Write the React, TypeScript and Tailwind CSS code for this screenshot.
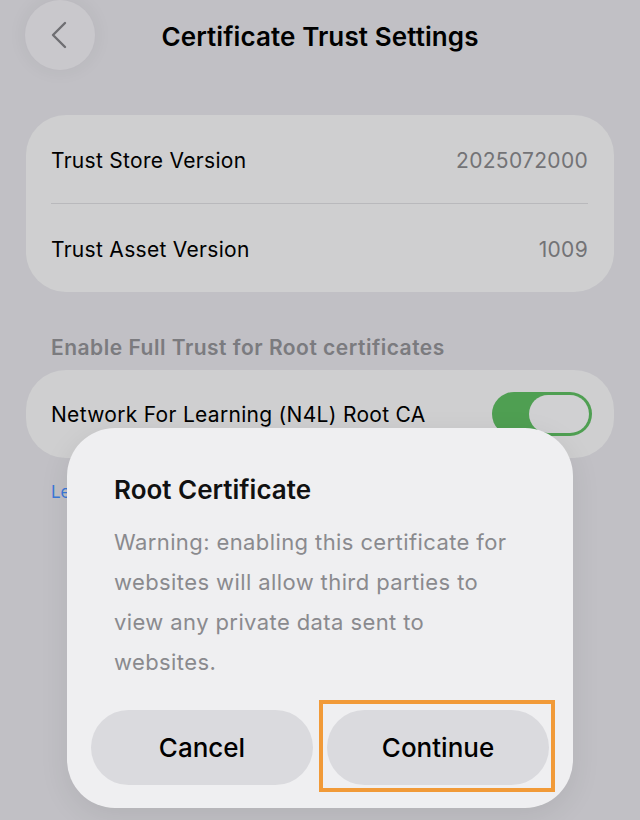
import { ChevronLeft } from 'lucide-react';

export default function App() {
  return (
    <div className="relative h-[820px] w-[640px] overflow-hidden bg-[#c1c0c5] text-black" style={{ fontFamily: 'Inter, "Noto Sans", sans-serif' }}>
      <div className="grid h-[72px] grid-cols-[95px_1fr_95px] items-start">
        <div className="pl-[25px]">
          <div className="flex h-[70px] w-[70px] items-center justify-center rounded-full bg-[#c9c8cc] shadow-[0_0_20px_rgba(0,0,0,0.06)]">
            <ChevronLeft className="-ml-[3px] h-[48px] w-[48px] text-[#6e6e72]" strokeWidth={1.2} />
          </div>
        </div>
        <h1 className="pt-[19px] text-center text-[26px] font-semibold leading-[36px] tracking-[0.1px]">Certificate Trust Settings</h1>
        <div />
      </div>

      <div className="mx-[26px] mt-[43px] rounded-[40px] bg-[#cfcfd0] pl-[25px] pr-[26px]">
        <div className="flex h-[88px] items-center justify-between pt-[3px] text-[21px] tracking-[0.3px]">
          <span>Trust Store Version</span>
          <span className="text-[#737376]">2025072000</span>
        </div>
        <div className="h-px bg-[#b9b9bc]" />
        <div className="flex h-[88px] items-center justify-between pt-[3px] text-[21px] tracking-[0.3px]">
          <span>Trust Asset Version</span>
          <span className="text-[#737376]">1009</span>
        </div>
      </div>

      <div className="mt-[44px] pl-[51px] text-[21px] font-semibold leading-[24px] tracking-[0.5px] text-[#7b7b7f]">Enable Full Trust for Root certificates</div>

      <div className="mx-[26px] mt-[10px] flex h-[88px] items-center justify-between rounded-[40px] bg-[#cfcfd0] pl-[25px] pr-[22px]">
        <span className="pt-[2px] text-[21px] tracking-[0.3px]">Network For Learning (N4L) Root CA</span>
        <div className="flex h-[44px] w-[100px] items-center justify-end rounded-full bg-[#4f9f52] p-[3px]">
          <div className="h-[38px] w-[60px] rounded-full bg-[#d0d0d2]" />
        </div>
      </div>

      <div className="mt-[22px] pl-[51px] text-[17px] text-[#3a78d8]">Learn more about trusted certificates</div>

      <div className="absolute left-[67px] top-[428px] flex h-[380px] w-[506px] flex-col rounded-[48px] bg-[#efeff1] px-[24px] pb-[23px] shadow-[0_8px_30px_rgba(0,0,0,0.08)]">
        <div className="px-[23px] pt-[44px]">
          <div className="text-[26px] font-semibold leading-[36px] text-[#111]">Root Certificate</div>
          <p className="mt-[14px] w-[405px] text-[22px] leading-[40px] tracking-[0.4px] text-[#8a8a8e]">
            Warning: enabling this certificate for websites will allow third parties to view any private data sent to websites.
          </p>
        </div>
        <div className="mt-auto flex gap-[14px]">
          <button className="h-[75px] flex-1 rounded-full bg-[#dadade] text-[26px] font-medium text-black">Cancel</button>
          <div className="relative flex-1">
            <button className="h-[75px] w-full rounded-full bg-[#dadade] text-[26px] font-medium text-black">Continue</button>
            <div className="pointer-events-none absolute -bottom-[7px] -left-[8px] -right-[6px] -top-[10px] border-[4px] border-[#f19a38]" />
          </div>
        </div>
      </div>
    </div>
  );
}
